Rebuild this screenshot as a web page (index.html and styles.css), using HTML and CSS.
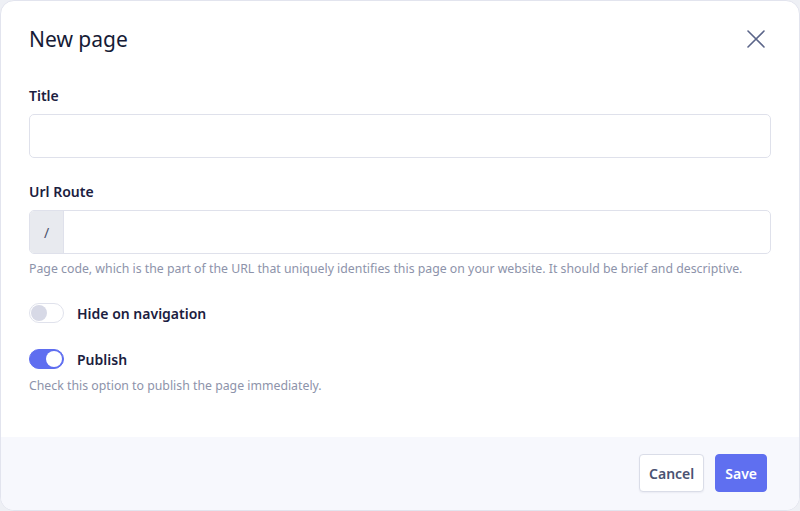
FILE: index.html
```html
<!DOCTYPE html>
<html lang="en">
<head>
<meta charset="utf-8">
<title>New page</title>
<link rel="stylesheet" href="styles.css">
</head>
<body>
<div class="modal">
  <div class="modal-body">
    <div class="modal-header">
      <h1 class="modal-title">New page</h1>
      <button class="close-btn" aria-label="Close">
        <svg width="18" height="18" viewBox="0 0 18 18"><path d="M1 1L17 17M17 1L1 17" stroke="#5b6589" stroke-width="1.6" stroke-linecap="round" fill="none"/></svg>
      </button>
    </div>
    <div class="field field-title">
      <label class="label">Title</label>
      <div class="input"></div>
    </div>
    <div class="field field-url">
      <label class="label">Url Route</label>
      <div class="input input-group"><span class="prefix">/</span><span class="grow"></span></div>
      <p class="help">Page code, which is the part of the URL that uniquely identifies this page on your website. It should be brief and descriptive.</p>
    </div>
    <div class="toggle-row toggle-hide">
      <span class="switch"><span class="knob"></span></span>
      <span class="toggle-label">Hide on navigation</span>
    </div>
    <div class="toggle-row toggle-publish">
      <span class="switch on"><span class="knob"></span></span>
      <span class="toggle-label">Publish</span>
    </div>
    <p class="help help-publish">Check this option to publish the page immediately.</p>
  </div>
  <div class="modal-footer">
    <button class="btn btn-cancel">Cancel</button>
    <button class="btn btn-save">Save</button>
  </div>
</div>
</body>
</html>
```
FILE: styles.css
```css
* { box-sizing: border-box; }
html, body { margin: 0; padding: 0; background: #eef0f5; }
body {
  font-family: "Noto Sans", "Open Sans", sans-serif;
  color: #1b2040;
  width: 800px;
  height: 511px;
}
.modal {
  width: 800px;
  height: 511px;
  background: #fff;
  border: 1px solid #e2e4ee;
  border-radius: 14px;
  overflow: hidden;
  display: flex;
  flex-direction: column;
}
.modal-body {
  flex: 1;
  padding: 0 28px 0 28px;
}
.modal-header {
  display: flex;
  align-items: center;
  justify-content: space-between;
  height: 75px;
  padding-top: 1px;
}
.modal-title {
  margin: 0;
  font-size: 21px;
  font-weight: 400;
  color: #161b36;
  letter-spacing: 0;
}
.close-btn {
  background: none;
  border: 0;
  padding: 0;
  margin-right: 6px;
  width: 18px;
  height: 18px;
  display: flex;
}
.field { display: flex; flex-direction: column; }
.field-title { margin-top: 10px; }
.field-url { margin-top: 24px; }
.label {
  font-size: 14px;
  font-weight: 600;
  color: #1b2040;
  line-height: 20px;
  margin-bottom: 8px;
}
.input {
  height: 44px;
  border: 1px solid #dfe1eb;
  border-radius: 5px;
  background: #fff;
}
.input-group { display: flex; overflow: hidden; }
.prefix {
  width: 34px;
  background: #e8eaef;
  border-right: 1px solid #dfe1eb;
  display: flex;
  align-items: center;
  justify-content: center;
  font-size: 14px;
  color: #4b526b;
}
.grow { flex: 1; }
.help {
  margin: 6px 0 0;
  font-size: 12.3px;
  line-height: 18px;
  color: #8d93aa;
}
.toggle-row {
  display: flex;
  align-items: center;
  gap: 13px;
  height: 20px;
}
.toggle-hide { margin-top: 25px; }
.toggle-publish { margin-top: 26px; }
.switch {
  width: 35px;
  height: 20px;
  border-radius: 10px;
  border: 1px solid #e0e2ec;
  background: #fff;
  position: relative;
  flex: none;
}
.switch .knob {
  position: absolute;
  top: 1px;
  left: 1px;
  width: 16px;
  height: 16px;
  border-radius: 50%;
  background: #d7d9e6;
}
.switch.on { background: #5f6ef0; border-color: #5f6ef0; }
.switch.on .knob { left: auto; right: 1px; background: #fff; }
.toggle-label {
  font-size: 14px;
  font-weight: 600;
  color: #1b2040;
}
.help-publish { margin-top: 8px; }
.modal-footer {
  height: 73px;
  background: #f7f8fd;
  display: flex;
  justify-content: flex-end;
  align-items: flex-start;
  gap: 11px;
  padding: 17px 32px 0 0;
}
.btn {
  height: 38px;
  border-radius: 4px;
  font-family: inherit;
  font-size: 14px;
  font-weight: 600;
  padding: 0 9px;
  cursor: pointer;
}
.btn-cancel {
  background: #fff;
  border: 1px solid #dadde8;
  color: #4a5272;
  box-shadow: 0 1px 2px rgba(30,40,80,0.06);
}
.btn-save {
  background: #5f6ff0;
  border: 1px solid #5f6ff0;
  color: #fff;
}
```
